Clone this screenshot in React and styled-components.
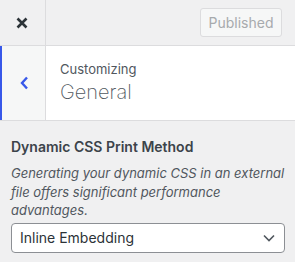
import React from 'react'
import styled, { createGlobalStyle } from 'styled-components'

const GlobalStyle = createGlobalStyle`
  body {
    margin: 0;
    background: #f0f0f1;
    font-family: Inter, "Noto Sans", sans-serif;
    color: #3c434a;
  }
`

function App() {
  return (
    <>
      <GlobalStyle />
      <StSidebar>
        <StHeader>
          <StClose aria-label="Close">
            <svg width="12" height="12" viewBox="0 0 12 12">
              <path d="M1.5 1.5 L10.5 10.5 M10.5 1.5 L1.5 10.5" stroke="#2c3338" strokeWidth="2.6" />
            </svg>
          </StClose>
          <StPublish disabled>Published</StPublish>
        </StHeader>

        <StPanelHead>
          <StBack aria-label="Back">
            <svg width="10" height="14" viewBox="0 0 10 14">
              <path d="M8 1.5 L3 7 L8 12.5" stroke="#3858e9" strokeWidth="2.4" fill="none" />
            </svg>
          </StBack>
          <StTitleBox>
            <StAction>Customizing</StAction>
            <StPanelTitle>General</StPanelTitle>
          </StTitleBox>
        </StPanelHead>

        <StControl>
          <StLabel>Dynamic CSS Print Method</StLabel>
          <StDesc>
            Generating your dynamic CSS in an external file offers significant performance advantages.
          </StDesc>
          <StSelect>
            <span>Inline Embedding</span>
            <svg width="14" height="10" viewBox="0 0 14 10">
              <path d="M2 2.5 L7 7.5 L12 2.5" stroke="#50575e" strokeWidth="1.6" fill="none" />
            </svg>
          </StSelect>
        </StControl>
      </StSidebar>
    </>
  )
}

export default App

const StSidebar = styled.div`
  width: 295px;
  height: 262px;
  background: #f0f0f1;
  overflow: hidden;
`

const StHeader = styled.div`
  height: 45px;
  display: flex;
  align-items: center;
  justify-content: space-between;
  border-bottom: 1px solid #dcdcde;
  padding-right: 13px;
`

const StClose = styled.button`
  width: 46px;
  height: 45px;
  display: flex;
  align-items: center;
  justify-content: center;
  background: transparent;
  border: none;
  border-right: 1px solid #dcdcde;
  padding: 0 1px 0 0;
`

const StPublish = styled.button`
  width: 82px;
  height: 29px;
  border: 1px solid #dcdcde;
  border-radius: 3px;
  background: #f6f7f7;
  color: #a7aaad;
  font-family: inherit;
  font-size: 14px;
  padding: 0;
`

const StPanelHead = styled.div`
  height: 74px;
  display: flex;
  background: #fff;
  border-bottom: 1px solid #dcdcde;
`

const StBack = styled.button`
  width: 46px;
  height: 100%;
  display: flex;
  align-items: center;
  justify-content: center;
  background: #f6f7f7;
  border: none;
  border-left: 2px solid #3858e9;
  border-right: 1px solid #dcdcde;
  padding: 0;
`

const StTitleBox = styled.div`
  padding: 14px 14px 0;
  display: flex;
  flex-direction: column;
`

const StAction = styled.span`
  font-size: 13px;
  line-height: 18px;
  color: #50575e;
`

const StPanelTitle = styled.h3`
  margin: 1px 0 0;
  font-size: 20px;
  font-weight: 200;
  line-height: 26px;
  color: #50575e;
`

const StControl = styled.div`
  padding: 16px 10px 0 11px;
`

const StLabel = styled.div`
  font-size: 14px;
  font-weight: 600;
  line-height: 20px;
  color: #3c434a;
  margin-bottom: 7px;
`

const StDesc = styled.div`
  font-size: 13px;
  font-style: italic;
  line-height: 18.5px;
  color: #50575e;
  margin-bottom: 3px;
`

const StSelect = styled.div`
  height: 30px;
  box-sizing: border-box;
  display: flex;
  align-items: center;
  justify-content: space-between;
  border: 1px solid #8c8f94;
  border-radius: 4px;
  background: #fff;
  padding: 0 8px;
  font-size: 14px;
  color: #2c3338;
`
